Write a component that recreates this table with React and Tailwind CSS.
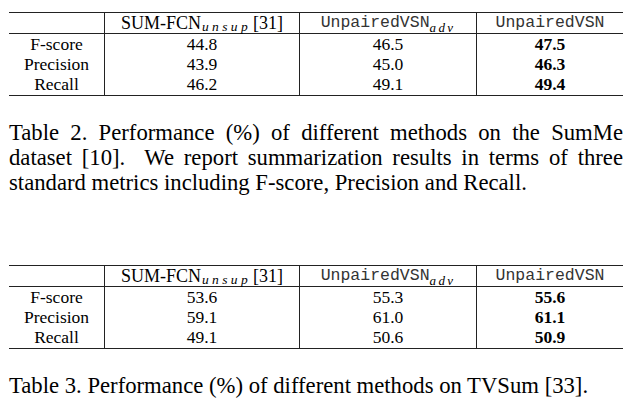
const TABLES = [
  {
    rows: [
      ["F-score", "44.8", "46.5", "47.5"],
      ["Precision", "43.9", "45.0", "46.3"],
      ["Recall", "46.2", "49.1", "49.4"],
    ],
  },
  {
    rows: [
      ["F-score", "53.6", "55.3", "55.6"],
      ["Precision", "59.1", "61.0", "61.1"],
      ["Recall", "49.1", "50.6", "50.9"],
    ],
  },
];

const cols = "grid grid-cols-[96px_195px_177px_146px]";

function Table({ rows }) {
  return (
    <div className="border-t border-b border-[#222] text-[17.5px] leading-none text-black">
      <div className={`${cols} h-[21px] border-b border-[#222]`}>
        <div className="border-r border-[#222]" />
        <div className="border-r border-[#222] flex items-center justify-center text-[18px]">
          <span>SUM-FCN</span>
          <span className="italic text-[13.5px] tracking-[0.25em] translate-y-[4px] ml-[1px]">unsup</span>
          <span className="ml-[2px]">[31]</span>
        </div>
        <div className="border-r border-[#222] flex items-center justify-center font-[family-name:Liberation_Mono,monospace] text-[16.5px] text-[#333]">
          <span>UnpairedVSN</span>
          <span className="font-[family-name:Liberation_Serif,serif] italic text-[13px] tracking-[0.18em] translate-y-[4px] text-black">adv</span>
        </div>
        <div className="flex items-center justify-center font-[family-name:Liberation_Mono,monospace] text-[16.5px] text-[#333]">
          UnpairedVSN
        </div>
      </div>
      {rows.map((r, i) => (
        <div key={i} className={`${cols} ${i === 2 ? "h-[20px]" : "h-[20.5px]"}`}>
          <div className="border-r border-[#222] flex items-center justify-center">{r[0]}</div>
          <div className="border-r border-[#222] flex items-center justify-center">{r[1]}</div>
          <div className="border-r border-[#222] flex items-center justify-center">{r[2]}</div>
          <div className="flex items-center justify-center font-bold">{r[3]}</div>
        </div>
      ))}
    </div>
  );
}

export default function App() {
  return (
    <div className="w-[644px] h-[412px] bg-white pl-[9px] pr-[21px] font-[family-name:Liberation_Serif,serif] text-black overflow-hidden">
      <div className="pt-[12px]">
        <Table rows={TABLES[0].rows} />
      </div>
      <div className="mt-[24px] text-[22.7px] leading-[25px]">
        <div className="text-justify [text-align-last:justify] whitespace-nowrap">
          Table 2. Performance (%) of different methods on the SumMe
        </div>
        <div className="text-justify [text-align-last:justify] whitespace-nowrap">
          dataset [10].&nbsp; We report summarization results in terms of three
        </div>
        <div className="whitespace-nowrap">standard metrics including F-score, Precision and Recall.</div>
      </div>
      <div className="mt-[70px]">
        <Table rows={TABLES[1].rows} />
      </div>
      <div className="mt-[24px] text-[22.7px] leading-[25px] whitespace-nowrap">
        Table 3. Performance (%) of different methods on TVSum [33].
      </div>
    </div>
  );
}
